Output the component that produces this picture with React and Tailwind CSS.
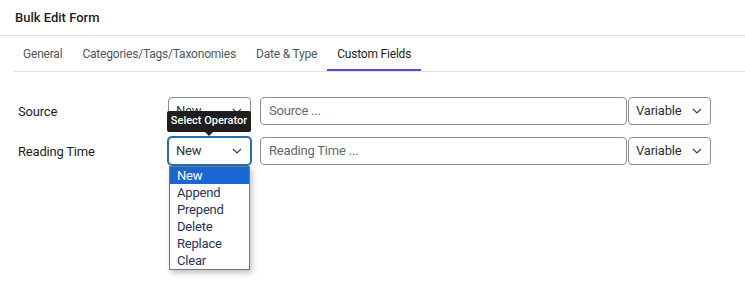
import React from "react";

const Chevron = () => (
  <svg width="10" height="6" viewBox="0 0 10 6" className="absolute right-[8px] top-1/2 -translate-y-1/2">
    <path d="M1 1 L5 5 L9 1" fill="none" stroke="#3c434a" strokeWidth="1.2" />
  </svg>
);

const Select = ({ value, focused, width = "w-[83px]" }) => (
  <div
    className={`relative ${width} h-[28px] rounded-[4px] border bg-white flex items-center pl-[7px] text-[13px] tracking-[-0.2px] text-[#2c3338] ${
      focused ? "border-[#2271b1] shadow-[0_0_0_1px_#2271b1]" : "border-[#8c8f94]"
    }`}
  >
    {value}
    <Chevron />
  </div>
);

const Input = ({ placeholder }) => (
  <div className="w-[367px] h-[28px] rounded-[4px] border border-[#8c8f94] bg-white flex items-center pl-[8px] text-[13px] tracking-[-0.2px] text-[#646970]">
    {placeholder}
  </div>
);

export default function App() {
  const tabs = ["General", "Categories/Tags/Taxonomies", "Date & Type", "Custom Fields"];
  const items = ["New", "Append", "Prepend", "Delete", "Replace", "Clear"];
  return (
    <div
      className="w-[745px] h-[300px] bg-white text-[#1e1e1e] overflow-hidden"
      style={{ fontFamily: '"Segoe UI", Roboto, sans-serif' }}
    >
      <div className="h-[36px] border-b border-[#e0e0e0] pl-[15px] flex items-center text-[13px] font-medium">
        Bulk Edit Form
      </div>
      <div className="ml-[13px] border-b border-[#e0e0e0] flex h-[36px]">
        {tabs.map((t, i) => (
          <div
            key={t}
            className={`px-[10px] pt-[3px] flex items-center text-[12px] tracking-[-0.2px] border-b-2 ${
              i === 3 ? "border-[#6c3fd6] text-[#1e1e1e]" : "border-transparent text-[#50575e]"
            }`}
          >
            {t}
          </div>
        ))}
      </div>
      <div className="pt-[25px] flex flex-col gap-[12px]">
        <div className="flex items-center">
          <div className="w-[168px] pl-[18px] pt-[2px] text-[13px] tracking-[-0.2px] text-[#1e1e1e]">Source</div>
          <Select value="New" />
          <div className="w-[9px]" />
          <Input placeholder="Source ..." />
          <div className="w-[1px]" />
          <Select value="Variable" />
        </div>
        <div className="flex items-center">
          <div className="w-[168px] pl-[18px] pt-[2px] text-[13px] tracking-[-0.2px] text-[#1e1e1e]">Reading Time</div>
          <div className="relative">
            <Select value="New" focused />
            <div className="absolute left-[-1px] top-[-26px] w-[84px] h-[21px] bg-[#1e1e1e] rounded-[2px] flex items-center justify-center text-white text-[11px] font-medium whitespace-nowrap">
              Select Operator
              <div className="absolute left-1/2 -translate-x-1/2 bottom-[-4px] w-0 h-0 border-l-[4px] border-r-[4px] border-t-[4px] border-l-transparent border-r-transparent border-t-[#1e1e1e]" />
            </div>
            <div className="absolute left-[1px] top-[29px] w-[81px] bg-white border border-[#767676] shadow-[2px_3px_6px_rgba(0,0,0,0.25)] z-10">
              {items.map((it, i) => (
                <div
                  key={it}
                  className={`h-[17px] flex items-center pl-[7px] text-[13px] tracking-[-0.2px] ${
                    i === 0 ? "bg-[#1a66d2] text-white" : "text-[#26345a]"
                  }`}
                >
                  {it}
                </div>
              ))}
            </div>
          </div>
          <div className="w-[9px]" />
          <Input placeholder="Reading Time ..." />
          <div className="w-[1px]" />
          <Select value="Variable" />
        </div>
      </div>
    </div>
  );
}
